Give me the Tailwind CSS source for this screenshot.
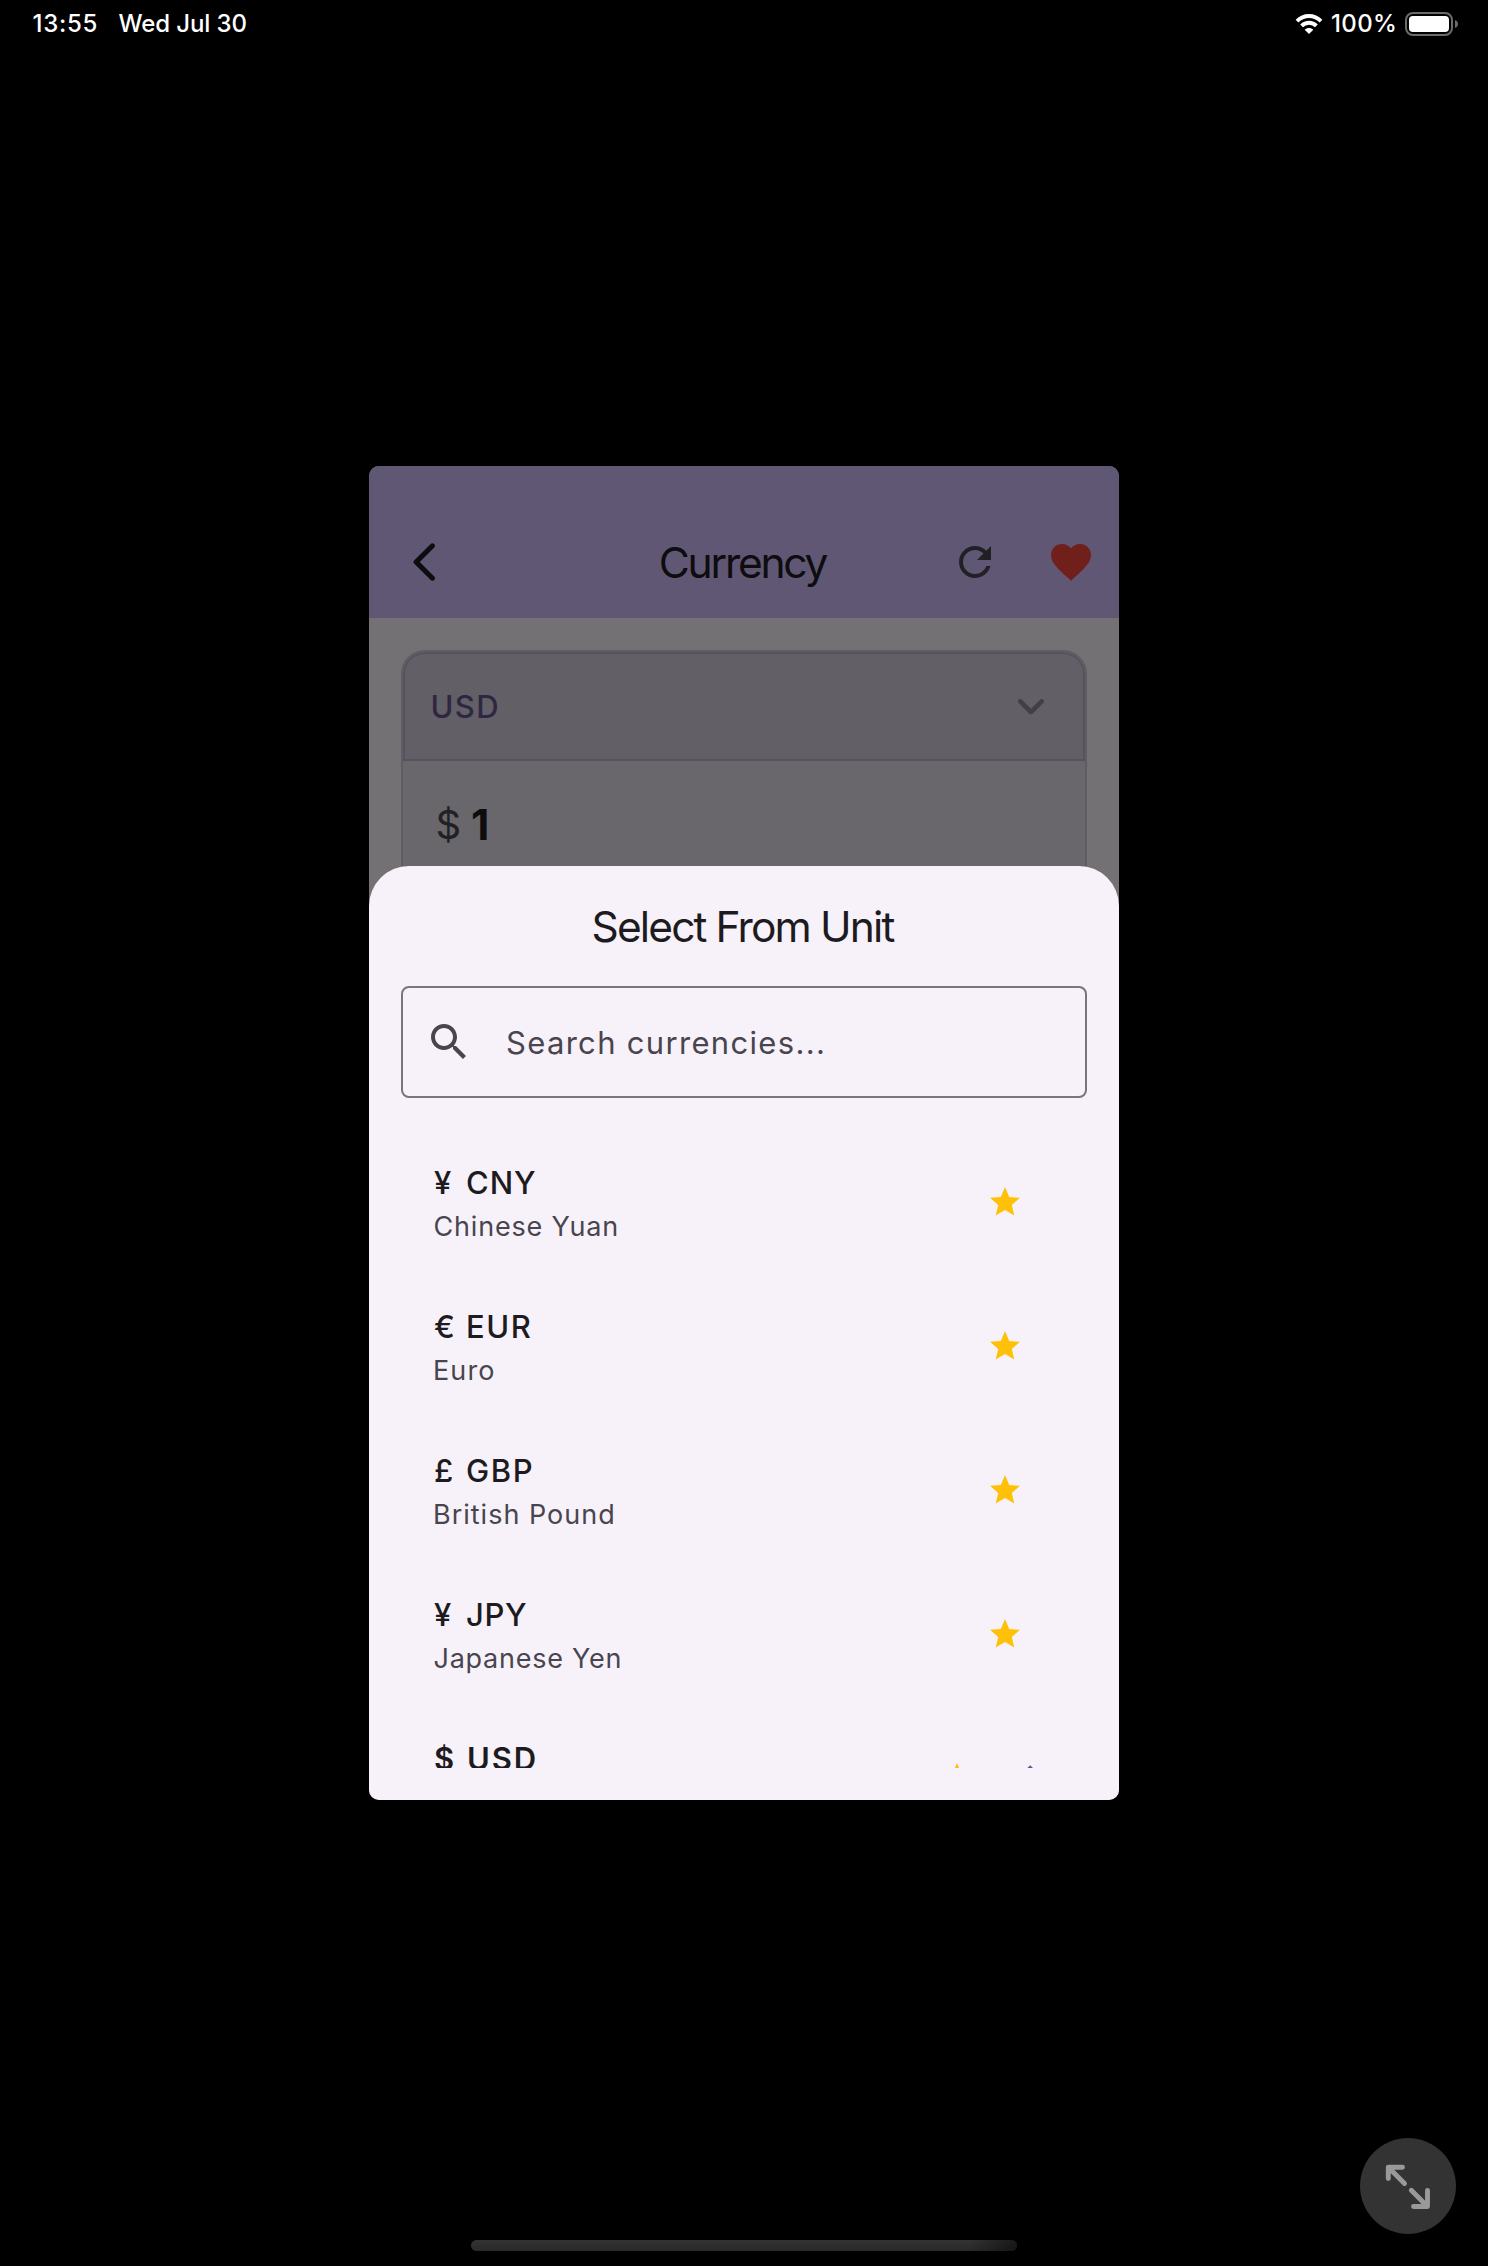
<!DOCTYPE html>
<html lang="en">
<head>
<meta charset="utf-8">
<title>Currency</title>
<script src="https://cdn.jsdelivr.net/npm/@tailwindcss/browser@4"></script>
</head>
<body class="bg-black font-['Inter',sans-serif]">
<svg class="hidden">
  <symbol id="star" viewBox="0 0 24 24"><path d="M12 17.27L18.18 21l-1.64-7.03L22 9.24l-7.19-.61L12 2 9.19 8.63 2 9.24l5.46 4.73L5.82 21z"/></symbol>
</svg>
<div class="flex flex-col w-[1488px] h-[2266px] bg-black overflow-hidden">

  <!-- Status bar -->
  <header class="flex h-[46px] items-center justify-between pl-[32.5px] pr-[29.5px] text-white text-[24px] font-medium leading-[44px] whitespace-nowrap">
    <div class="flex pt-0.5">
      <span class="w-[86px] tracking-[0.7px]">13:55</span>
      <span class="tracking-[-0.1px]">Wed Jul 30</span>
    </div>
    <div class="flex items-center">
      <svg class="w-[28px] h-[20px] mr-[8px] mt-0.5" viewBox="0 0 28 20" fill="none" stroke="#fff" stroke-width="3.9">
        <path d="M2 7.2C8.8 .3 19.2 .3 26 7.2"/>
        <path d="M6.6 11.9c4.2-4.2 10.6-4.2 14.8 0"/>
        <path d="M14 20l-4.3-4.2c2.4-2.3 6.2-2.3 8.6 0z" fill="#fff" stroke="none"/>
      </svg>
      <span class="tracking-[0.35px] w-[73.5px] pt-0.5">100%</span>
      <svg class="w-[54px] h-[24px] mt-0.5" viewBox="0 0 54 24">
        <rect x="1" y="1" width="46" height="22" rx="7" fill="none" stroke="#6b6b6b" stroke-width="2"/>
        <rect x="4" y="4" width="40" height="16" rx="4" fill="#fff"/>
        <path d="M50 8c4 1.2 4 6.8 0 8z" fill="#6b6b6b"/>
      </svg>
    </div>
  </header>

  <!-- App window -->
  <main class="relative shrink-0 self-center mt-[420px] w-[750px] h-[1334px] rounded-[10px] bg-[#737174] overflow-hidden">
    <div class="flex items-center h-[152px] pt-10 bg-[#605775]">
      <div class="w-[168px] pl-8">
        <svg class="size-12" viewBox="0 0 24 24" fill="#0d0c0e"><path d="M16.62 2.99c-.49-.49-1.28-.49-1.77 0L6.54 11.3c-.39.39-.39 1.02 0 1.41l8.31 8.31c.49.49 1.28.49 1.77 0s.49-1.28 0-1.77L9.38 12l7.25-7.25c.48-.48.48-1.28-.01-1.76z"/></svg>
      </div>
      <h1 class="flex-1 text-center pt-[2px] pr-[3px] text-[42.5px] leading-[56px] tracking-[-2.25px] text-[#0d0c0e]">Currency</h1>
      <div class="flex w-[168px] gap-12">
        <svg class="size-12" viewBox="0 0 24 24" fill="#212024"><path d="M17.65 6.35C16.2 4.9 14.21 4 12 4c-4.42 0-7.99 3.58-7.99 8s3.57 8 7.99 8c3.73 0 6.84-2.55 7.73-6h-2.08c-.82 2.33-3.04 4-5.65 4-3.31 0-6-2.69-6-6s2.69-6 6-6c1.66 0 3.14.69 4.22 1.78L13 11h7V4l-2.35 2.35z"/></svg>
        <svg class="size-12" viewBox="0 0 24 24" fill="#701f1a"><path d="M12 21.35l-1.45-1.32C5.4 15.36 2 12.28 2 8.5 2 5.42 4.42 3 7.5 3c1.74 0 3.41.81 4.5 2.09C13.09 3.81 14.76 3 16.5 3 19.58 3 22 5.42 22 8.5c0 3.78-3.4 6.86-8.55 11.54L12 21.35z"/></svg>
      </div>
    </div>

    <section class="mx-8 mt-8 h-[400px] rounded-[24px] border-2 border-[#5f5d62] bg-[#69676c] overflow-hidden">
      <div class="flex items-center justify-between h-[109px] rounded-t-[22px] border-2 border-[#565261] bg-[#625f66] pl-[25.5px] pr-6">
        <span class="text-[31px] leading-[40px] font-medium tracking-[1.4px] text-[#2e2742]">USD</span>
        <svg class="size-14 -mt-px" viewBox="0 0 24 24" fill="#434045"><path d="M8.12 9.29L12 13.17l3.88-3.88c.39-.39 1.02-.39 1.41 0s.39 1.02 0 1.41l-4.59 4.59c-.39.39-1.02.39-1.41 0L6.7 10.7c-.39-.39-.39-1.02 0-1.41.39-.38 1.03-.39 1.42 0z"/></svg>
      </div>
      <div class="flex items-center h-[127px] pl-[32.5px] text-[42.5px] leading-[56px]">
        <span class="w-[35.5px] text-[40px] text-[#212024]">$</span>
        <span class="font-bold text-[#0d0c0e]">1</span>
      </div>
    </section>

    <!-- Bottom sheet -->
    <section class="absolute inset-x-0 bottom-0 h-[934px] flex flex-col px-8 pb-8 rounded-t-[40px] bg-[#f7f2fa] text-[#1d1b20]">
      <h2 class="h-[120px] shrink-0 text-center pr-[3px] text-[42.5px] leading-[122px] tracking-[-1.88px]">Select From Unit</h2>
      <div class="flex shrink-0 items-center h-[112px] pl-[22px] gap-[33px] rounded-lg border-2 border-[#79747e] text-[#49454f]">
        <svg class="size-12" viewBox="0 0 24 24" fill="#49454f"><path d="M15.5 14h-.79l-.28-.27C15.41 12.59 16 11.11 16 9.5 16 5.91 13.09 3 9.5 3S3 5.91 3 9.5 5.91 16 9.5 16c1.61 0 3.09-.59 4.23-1.57l.27.28v.79l5 4.99L20.49 19l-4.99-5zm-6 0C7.01 14 5 11.99 5 9.5S7.01 5 9.5 5 14 7.01 14 9.5 11.99 14 9.5 14z"/></svg>
        <span class="pt-0.5 text-[31px] leading-[40px] tracking-[1.32px]">Search currencies...</span>
      </div>
      <ul class="mt-8 flex-1 overflow-hidden whitespace-nowrap">
        <li class="flex items-center justify-between h-36 pl-8 pr-16">
          <div class="pt-1.5 leading-[44px]">
            <div class="flex text-[31px] font-medium"><span class="w-[33px] pl-px">¥</span><span class="tracking-[0.9px]">CNY</span></div>
            <div class="pl-[0.5px] text-[27px] tracking-[0.8px] text-[#49454f]">Chinese Yuan</div>
          </div>
          <svg class="size-9" fill="#ffc107"><use href="#star"/></svg>
        </li>
        <li class="flex items-center justify-between h-36 pl-8 pr-16">
          <div class="pt-1.5 leading-[44px]">
            <div class="flex text-[31px] font-medium"><span class="w-[33px] pl-px">€</span><span class="tracking-[1.5px]">EUR</span></div>
            <div class="text-[27px] tracking-[1.1px] text-[#49454f]">Euro</div>
          </div>
          <svg class="size-9" fill="#ffc107"><use href="#star"/></svg>
        </li>
        <li class="flex items-center justify-between h-36 pl-8 pr-16">
          <div class="pt-1.5 leading-[44px]">
            <div class="flex text-[31px] font-medium"><span class="w-[33px] pl-px">£</span><span class="tracking-[1.6px]">GBP</span></div>
            <div class="text-[27px] tracking-[1px] text-[#49454f]">British Pound</div>
          </div>
          <svg class="size-9" fill="#ffc107"><use href="#star"/></svg>
        </li>
        <li class="flex items-center justify-between h-36 pl-8 pr-16">
          <div class="pt-1.5 leading-[44px]">
            <div class="flex text-[31px] font-medium"><span class="w-[33px] pl-px">¥</span><span class="tracking-[0.7px]">JPY</span></div>
            <div class="pl-[0.5px] text-[27px] tracking-[0.75px] text-[#49454f]">Japanese Yen</div>
          </div>
          <svg class="size-9" fill="#ffc107"><use href="#star"/></svg>
        </li>
        <li class="flex items-center justify-between h-36 pl-8 pr-12">
          <div class="pt-1.5 leading-[44px]">
            <div class="flex text-[31px] font-semibold"><span class="w-[34px] pl-px">$</span><span class="tracking-[1.9px]">USD</span></div>
            <div class="text-[27px] tracking-[0.83px] text-[#49454f]">US Dollar</div>
          </div>
          <div class="flex items-center gap-4">
            <svg class="size-9" fill="#ffc107"><use href="#star"/></svg>
            <svg class="size-12" viewBox="0 0 24 24" fill="#65558f"><path d="M9 16.17L4.83 12l-1.42 1.41L9 19 21 7l-1.41-1.41z"/></svg>
          </div>
        </li>
      </ul>
    </section>
  </main>

  <!-- Zoom button and home indicator -->
  <button class="shrink-0 self-end mt-[338px] mr-8 size-24 rounded-full bg-[#333]">
    <svg class="size-24" viewBox="0 0 96 96" fill="none" stroke="#999" stroke-width="4.9" stroke-linecap="round" stroke-linejoin="round">
      <path d="M42.5 29.3H28.3V40.5M28.8 29.8L44.5 45.5M67.5 52.500V68.500H53.500M67 68L51.300 52.300"/>
    </svg>
  </button>
  <div class="shrink-0 self-center mt-[6px] w-[546px] h-[11px] rounded-full bg-linear-to-b from-[#333] to-[#292929] overflow-hidden">
    <div class="ml-auto w-12 h-3 bg-linear-to-r from-transparent to-black/50"></div>
  </div>
</div>
</body>
</html>
